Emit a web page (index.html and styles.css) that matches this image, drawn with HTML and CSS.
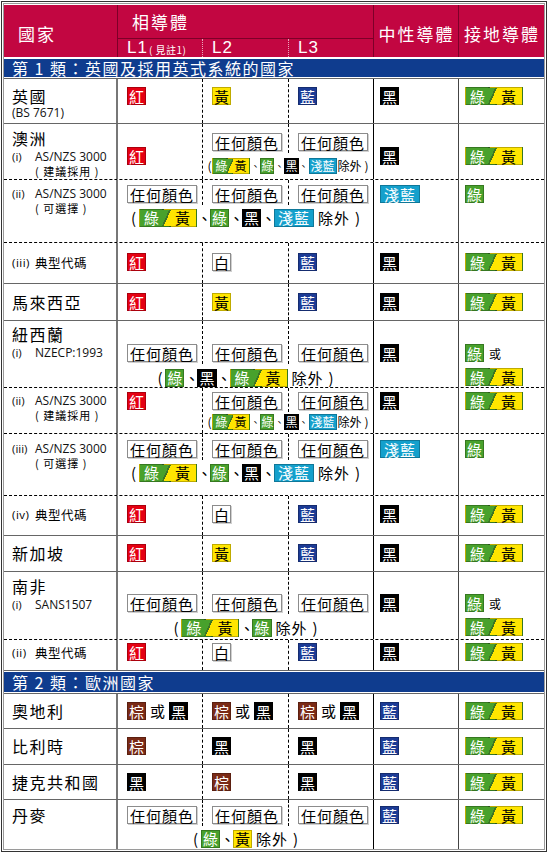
FILE: index.html
```html
<!DOCTYPE html>
<html lang="zh-Hant">
<head>
<meta charset="utf-8">
<title>各國電線顏色標準</title>
<link rel="stylesheet" href="styles.css">
</head>
<body>
<div class="frame">
<div class="sheet">
  <div class="head">
    <div class="hc h-country">國家</div>
    <div class="hc h-phase">相導體</div>
    <div class="hc h-neutral">中性導體</div>
    <div class="hc h-earth">接地導體</div>
    <div class="hc h-l h-l1">L1<small>( 見註1)</small></div>
    <div class="hc h-l h-l2">L2</div>
    <div class="hc h-l h-l3">L3</div>
  </div>

  <div class="band band1">第 1 類：英國及採用英式系統的國家</div>

  <!-- 英國 -->
  <div class="row r1">
    <div class="cc"><div class="t">英國</div><div class="s tight">(BS 7671)</div></div>
    <div class="c dr"><span class="b red">紅</span></div>
    <div class="c dr"><span class="b yel">黃</span></div>
    <div class="c l3"><span class="b blu">藍</span></div>
    <div class="c nu"><span class="b blk">黑</span></div>
    <div class="c ea"><span class="b gy"><span class="g">綠</span><span class="y">黃</span></span></div>
  </div>

  <!-- 澳洲 (i) -->
  <div class="row r2">
    <div class="cc"><div class="t">澳洲</div><div class="s"><span class="n">(i)</span>AS/NZS 3000</div><div class="s2">( 建議採用 )</div></div>
    <div class="c dr"><span class="b red">紅</span></div>
    <div class="lg lg2">
      <div class="lc dr"><span class="b any">任何顏色</span></div>
      <div class="lc"><span class="b any">任何顏色</span></div>
      <div class="ex small"><span class="p">(</span><span class="b gy sm"><span class="g">綠</span><span class="y">黃</span></span><span class="sep">、</span><span class="b grn sm">綠</span><span class="sep">、</span><span class="b blk sm">黑</span><span class="sep">、</span><span class="b cyn sm">淺藍</span><span class="w">除外</span><span class="p">)</span></div>
    </div>
    <div class="c nu"><span class="b blk">黑</span></div>
    <div class="c ea"><span class="b gy"><span class="g">綠</span><span class="y">黃</span></span></div>
  </div>

  <!-- 澳洲 (ii) -->
  <div class="row sub r3">
    <div class="cc"><div class="s"><span class="n">(ii)</span>AS/NZS 3000</div><div class="s2">( 可選擇 )</div></div>
    <div class="lg lg3">
      <div class="lc dr"><span class="b any">任何顏色</span></div>
      <div class="lc dr"><span class="b any">任何顏色</span></div>
      <div class="lc"><span class="b any">任何顏色</span></div>
      <div class="ex"><span class="p">(</span><span class="b gy"><span class="g">綠</span><span class="y">黃</span></span><span class="sep">、</span><span class="b grn">綠</span><span class="sep">、</span><span class="b blk">黑</span><span class="sep">、</span><span class="b cyn">淺藍</span><span class="w">除外</span><span class="p">)</span></div>
    </div>
    <div class="c nu"><span class="b cyn">淺藍</span></div>
    <div class="c ea"><span class="b grn">綠</span></div>
  </div>

  <!-- 澳洲 (iii) -->
  <div class="row sub r4">
    <div class="cc"><div class="tt"><span class="n">(iii)</span>典型代碼</div></div>
    <div class="c dr"><span class="b red">紅</span></div>
    <div class="c dr"><span class="b wht">白</span></div>
    <div class="c l3"><span class="b blu">藍</span></div>
    <div class="c nu"><span class="b blk">黑</span></div>
    <div class="c ea"><span class="b gy"><span class="g">綠</span><span class="y">黃</span></span></div>
  </div>

  <!-- 馬來西亞 -->
  <div class="row r5">
    <div class="cc"><div class="t">馬來西亞</div></div>
    <div class="c dr"><span class="b red">紅</span></div>
    <div class="c dr"><span class="b yel">黃</span></div>
    <div class="c l3"><span class="b blu">藍</span></div>
    <div class="c nu"><span class="b blk">黑</span></div>
    <div class="c ea"><span class="b gy"><span class="g">綠</span><span class="y">黃</span></span></div>
  </div>

  <!-- 紐西蘭 (i) -->
  <div class="row r6">
    <div class="cc"><div class="t">紐西蘭</div><div class="s"><span class="n">(i)</span>NZECP:1993</div></div>
    <div class="lg lg3">
      <div class="lc dr"><span class="b any">任何顏色</span></div>
      <div class="lc dr"><span class="b any">任何顏色</span></div>
      <div class="lc"><span class="b any">任何顏色</span></div>
      <div class="ex"><span class="p">(</span><span class="b grn">綠</span><span class="sep">、</span><span class="b blk">黑</span><span class="sep">、</span><span class="b gy"><span class="g">綠</span><span class="y">黃</span></span><span class="w">除外</span><span class="p">)</span></div>
    </div>
    <div class="c nu"><span class="b blk">黑</span></div>
    <div class="c ea">
      <div class="ln"><span class="b grn">綠</span><span class="or">或</span></div>
      <div class="ln next"><span class="b gy"><span class="g">綠</span><span class="y">黃</span></span></div>
    </div>
  </div>

  <!-- 紐西蘭 (ii) -->
  <div class="row sub r7">
    <div class="cc"><div class="s"><span class="n">(ii)</span>AS/NZS 3000</div><div class="s2">( 建議採用 )</div></div>
    <div class="c dr"><span class="b red">紅</span></div>
    <div class="lg lg2">
      <div class="lc dr"><span class="b any">任何顏色</span></div>
      <div class="lc"><span class="b any">任何顏色</span></div>
      <div class="ex small"><span class="p">(</span><span class="b gy sm"><span class="g">綠</span><span class="y">黃</span></span><span class="sep">、</span><span class="b grn sm">綠</span><span class="sep">、</span><span class="b blk sm">黑</span><span class="sep">、</span><span class="b cyn sm">淺藍</span><span class="w">除外</span><span class="p">)</span></div>
    </div>
    <div class="c nu"><span class="b blk">黑</span></div>
    <div class="c ea"><span class="b gy"><span class="g">綠</span><span class="y">黃</span></span></div>
  </div>

  <!-- 紐西蘭 (iii) -->
  <div class="row sub r8">
    <div class="cc"><div class="s"><span class="n">(iii)</span>AS/NZS 3000</div><div class="s2">( 可選擇 )</div></div>
    <div class="lg lg3">
      <div class="lc dr"><span class="b any">任何顏色</span></div>
      <div class="lc dr"><span class="b any">任何顏色</span></div>
      <div class="lc"><span class="b any">任何顏色</span></div>
      <div class="ex"><span class="p">(</span><span class="b gy"><span class="g">綠</span><span class="y">黃</span></span><span class="sep">、</span><span class="b grn">綠</span><span class="sep">、</span><span class="b blk">黑</span><span class="sep">、</span><span class="b cyn">淺藍</span><span class="w">除外</span><span class="p">)</span></div>
    </div>
    <div class="c nu"><span class="b cyn">淺藍</span></div>
    <div class="c ea"><span class="b grn">綠</span></div>
  </div>

  <!-- 紐西蘭 (iv) -->
  <div class="row sub r9">
    <div class="cc"><div class="tt"><span class="n">(iv)</span>典型代碼</div></div>
    <div class="c dr"><span class="b red">紅</span></div>
    <div class="c dr"><span class="b wht">白</span></div>
    <div class="c l3"><span class="b blu">藍</span></div>
    <div class="c nu"><span class="b blk">黑</span></div>
    <div class="c ea"><span class="b gy"><span class="g">綠</span><span class="y">黃</span></span></div>
  </div>

  <!-- 新加坡 -->
  <div class="row r10">
    <div class="cc"><div class="t">新加坡</div></div>
    <div class="c dr"><span class="b red">紅</span></div>
    <div class="c dr"><span class="b yel">黃</span></div>
    <div class="c l3"><span class="b blu">藍</span></div>
    <div class="c nu"><span class="b blk">黑</span></div>
    <div class="c ea"><span class="b gy"><span class="g">綠</span><span class="y">黃</span></span></div>
  </div>

  <!-- 南非 (i) -->
  <div class="row r11">
    <div class="cc"><div class="t">南非</div><div class="s"><span class="n">(i)</span>SANS1507</div></div>
    <div class="lg lg3">
      <div class="lc dr"><span class="b any">任何顏色</span></div>
      <div class="lc dr"><span class="b any">任何顏色</span></div>
      <div class="lc"><span class="b any">任何顏色</span></div>
      <div class="ex"><span class="p">(</span><span class="b gy"><span class="g">綠</span><span class="y">黃</span></span><span class="sep">、</span><span class="b grn">綠</span><span class="w">除外</span><span class="p">)</span></div>
    </div>
    <div class="c nu"><span class="b blk">黑</span></div>
    <div class="c ea">
      <div class="ln"><span class="b grn">綠</span><span class="or">或</span></div>
      <div class="ln next"><span class="b gy"><span class="g">綠</span><span class="y">黃</span></span></div>
    </div>
  </div>

  <!-- 南非 (ii) -->
  <div class="row sub end r12">
    <div class="cc"><div class="tt"><span class="n">(ii)</span>典型代碼</div></div>
    <div class="c dr"><span class="b red">紅</span></div>
    <div class="c dr"><span class="b wht">白</span></div>
    <div class="c l3"><span class="b blu">藍</span></div>
    <div class="c nu"><span class="b blk">黑</span></div>
    <div class="c ea"><span class="b gy"><span class="g">綠</span><span class="y">黃</span></span></div>
  </div>

  <div class="band band2">第 2 類：歐洲國家</div>

  <!-- 奧地利 -->
  <div class="row r13">
    <div class="cc"><div class="t">奧地利</div></div>
    <div class="c dr"><span class="b brn">棕</span><span class="or big">或</span><span class="b blk">黑</span></div>
    <div class="c dr"><span class="b brn">棕</span><span class="or big">或</span><span class="b blk">黑</span></div>
    <div class="c l3"><span class="b brn">棕</span><span class="or big">或</span><span class="b blk">黑</span></div>
    <div class="c nu"><span class="b blu">藍</span></div>
    <div class="c ea"><span class="b gy"><span class="g">綠</span><span class="y">黃</span></span></div>
  </div>

  <!-- 比利時 -->
  <div class="row r14">
    <div class="cc"><div class="t">比利時</div></div>
    <div class="c dr"><span class="b brn">棕</span></div>
    <div class="c dr"><span class="b blk">黑</span></div>
    <div class="c l3"><span class="b blk">黑</span></div>
    <div class="c nu"><span class="b blu">藍</span></div>
    <div class="c ea"><span class="b gy"><span class="g">綠</span><span class="y">黃</span></span></div>
  </div>

  <!-- 捷克共和國 -->
  <div class="row r15">
    <div class="cc"><div class="t">捷克共和國</div></div>
    <div class="c dr"><span class="b blk">黑</span></div>
    <div class="c dr"><span class="b brn">棕</span></div>
    <div class="c l3"><span class="b blk">黑</span></div>
    <div class="c nu"><span class="b blu">藍</span></div>
    <div class="c ea"><span class="b gy"><span class="g">綠</span><span class="y">黃</span></span></div>
  </div>

  <!-- 丹麥 -->
  <div class="row r16">
    <div class="cc"><div class="t">丹麥</div></div>
    <div class="lg lg3">
      <div class="lc dr"><span class="b any">任何顏色</span></div>
      <div class="lc dr"><span class="b any">任何顏色</span></div>
      <div class="lc"><span class="b any">任何顏色</span></div>
      <div class="ex"><span class="p">(</span><span class="b grn">綠</span><span class="sep">、</span><span class="b yel">黃</span><span class="w">除外</span><span class="p">)</span></div>
    </div>
    <div class="c nu"><span class="b blu">藍</span></div>
    <div class="c ea"><span class="b gy"><span class="g">綠</span><span class="y">黃</span></span></div>
  </div>
</div>
</div>
</body>
</html>
```
FILE: styles.css
```css
* { box-sizing: border-box; }
html, body { margin: 0; padding: 0; background: #fff; }
body {
  font-family: "Noto Sans CJK TC", "Noto Sans", sans-serif;
  color: #000;
}

.frame {
  margin: 1px;
  width: 546px;
  border: 1px solid #333;
  padding: 1px;
}
.sheet { border: 1px solid #9a9a9a; }

/* ---------- header ---------- */
.head {
  display: grid;
  grid-template-columns: 114px 85px 86px 85px 85px 85px;
  grid-template-rows: 34px 18px;
  margin-top: 1px;
  background: #c20641;
}
.hc {
  color: #fff;
  display: flex;
  align-items: center;
  font-size: 17px;
  letter-spacing: 2px;
  white-space: nowrap;
}
.h-country { grid-row: 1 / 3; grid-column: 1; padding: 4px 0 0 14px; border-right: 1px solid #7d0028; }
.h-phase { grid-row: 1; grid-column: 2 / 5; padding-left: 14px; border-right: 1px solid #7d0028; border-bottom: 1px solid #7d0028; }
.h-neutral { grid-row: 1 / 3; grid-column: 5; justify-content: center; padding: 4px 0 0 1px; border-right: 1px solid #7d0028; }
.h-earth { grid-row: 1 / 3; grid-column: 6; justify-content: center; padding: 4px 0 0 1px; }
.h-l {
  grid-row: 2;
  padding-left: 9px;
  font-family: "Liberation Sans", Arial, sans-serif;
  font-size: 17px;
  letter-spacing: 1px;
}
.h-l small {
  font-family: "Noto Sans CJK TC", sans-serif;
  font-size: 10px;
  letter-spacing: 0.5px;
  margin-left: 1px;
  padding-top: 2px;
}
.h-l1 { grid-column: 2; border-right: 1px dotted rgba(255,255,255,0.65); }
.h-l2 { grid-column: 3; border-right: 1px dotted rgba(255,255,255,0.65); }
.h-l3 { grid-column: 4; border-right: 1px solid #7d0028; }

/* ---------- category band ---------- */
.band {
  background: #0f3c8e;
  color: #fff;
  font-size: 16px;
  letter-spacing: 1.5px;
  padding-left: 8px;
  display: flex;
  align-items: center;
  white-space: nowrap;
}
.band1 { height: 18px; margin: 2px 0 1px; }
.band2 { height: 20px; margin: 1px 0; }

/* ---------- rows ---------- */
.row {
  display: grid;
  grid-template-columns: 114px 85px 86px 85px 85px 85px;
  grid-template-rows: 1fr;
  border-top: 1px solid #666;
}
.row.sub { border-top: 1px dashed #000; }
.row.end { border-bottom: 1px solid #666; }

.cc {
  padding: var(--cpt, var(--pt)) 0 0 8px;
  border-right: 2px solid #777;
}
.c { padding-top: var(--pt); padding-left: 9px; display: flex; align-items: flex-start; }
.c.nu, .c.ea { padding-left: 6px; }
.ea { flex-direction: column; }
.dr { border-right: 1px dashed #000; }
.l3 { border-right: 1px solid #000; }
.nu { border-right: 1px solid #444; }

.lg {
  display: grid;
  align-content: start;
  border-right: 1px solid #000;
}
.lg3 { grid-column: span 3; grid-template-columns: 85px 86px 84px; }
.lg2 { grid-column: span 2; grid-template-columns: 86px 84px; }
.lc {
  display: flex;
  align-items: flex-start;
  padding: var(--lpt, var(--pt)) 0 2px 9px;
}

.ex {
  grid-column: 1 / -1;
  margin-top: var(--em, 3px);
  display: flex;
  justify-content: center;
  align-items: center;
  height: 19px;
  font-size: 15px;
  line-height: 19px;
  white-space: nowrap;
}
.ex .p { padding: 0 3px; }
.ex .w { margin-left: 4px; letter-spacing: 1px; }
.ex .w + .p { margin-left: 2px; }
.ex .sep { display: inline-block; width: 13px; text-align: center; }
.ex.small { font-size: 12px; height: 17px; line-height: 17px; }
.ex.small .p { padding: 0 1px; }
.ex.small .sep { width: 10px; font-size: 10px; }
.ex.small .w { margin-left: 1px; letter-spacing: 0; }

.ln { display: flex; align-items: center; height: 18px; }
.ln.next { margin-top: 6px; }
.or { font-size: 12px; margin-left: 5px; }
.or.big { font-size: 15px; margin: 0 4px; height: 18px; line-height: 18px; }

/* country cell text */
.t { font-size: 16px; line-height: 18px; height: 18px; letter-spacing: 1.5px; white-space: nowrap; }
.s {
  display: flex;
  font-family: "Open Sans", "Noto Sans", sans-serif;
  font-size: 12px;
  line-height: 14px;
  height: 14px;
  color: #111;
  white-space: nowrap;
}
.t + .s { margin-top: 3px; }
.t + .s.tight { margin-top: 1px; }
.n { width: 23px; flex: none; font-family: "Open Sans", "Noto Sans", sans-serif; font-size: 11.5px; }
.s2 { padding-left: 23px; margin-top: 1px; font-size: 11px; line-height: 12px; height: 12px; letter-spacing: 1px; white-space: nowrap; }
.tt { display: flex; align-items: center; height: 18px; font-size: 12.5px; letter-spacing: 0.5px; white-space: nowrap; }

/* ---------- colour badges ---------- */
.b {
  display: inline-flex;
  align-items: center;
  justify-content: center;
  flex: none;
  height: 18px;
  min-width: 18px;
  padding: 0 1px;
  font-size: 15px;
  line-height: 1;
  color: #fff;
  border: 1px solid rgba(0,0,0,0.25);
  white-space: nowrap;
}
.red { background: #e50012; }
.yel { background: #ffe500; color: #000; }
.blu { background: #1c3b95; }
.blk { background: #000; }
.grn { background: #48a12c; }
.cyn { background: #14a0cc; width: 40px; letter-spacing: 1px; }
.brn { background: #7a2a16; }
.wht { background: #fff; color: #000; border: 1px solid #8c8c8c; box-shadow: 1px 1px 0 #d0d0d0; }
.any {
  width: 70px;
  background: #fff;
  color: #000;
  border: 1px solid #8c8c8c;
  box-shadow: 1px 1px 0 #d0d0d0;
  letter-spacing: 1px;
  padding-left: 1px;
}
.gy {
  width: 58px;
  justify-content: space-between;
  padding: 0 6px 0 4px;
  background: linear-gradient(114deg, #48a12c 0 46%, #3d7524 46% 49%, #ffe500 49% 100%);
}
.gy .g { color: #fff; }
.gy .y { color: #000; }

.b.sm { height: 16px; min-width: 14px; font-size: 12px; padding: 0; }
.gy.sm { width: 38px; padding: 0 3px 0 2px; }
.cyn.sm { width: 28px; letter-spacing: 0; }

/* ---------- per-row metrics ---------- */
.r1  { height: 45px; --pt: 8px; }
.r2  { height: 56px; --pt: 23px; --cpt: 5px; --lpt: 9px; --em: 4px; }
.r3  { height: 63px; --pt: 5px; --cpt: 7px; --em: 3px; }
.r4  { height: 41px; --pt: 10px; }
.r5  { height: 37px; --pt: 9px; }
.r6  { height: 67px; --pt: 23px; --cpt: 4px; --em: 4px; }
.r7  { height: 46px; --pt: 4px; --cpt: 6px; --em: 1px; }
.r8  { height: 62px; --pt: 6px; --cpt: 8px; --em: 3px; }
.r9  { height: 40px; --pt: 9px; }
.r10 { height: 36px; --pt: 8px; }
.r11 { height: 68px; --pt: 22px; --cpt: 5px; --em: 4px; }
.r12 { height: 32px; --pt: 3px; }
.r13 { height: 35px; --pt: 8px; }
.r14 { height: 36px; --pt: 8px; }
.r15 { height: 35px; --pt: 8px; }
.r16 { height: 50px; --pt: 6px; --em: 3px; }
```
